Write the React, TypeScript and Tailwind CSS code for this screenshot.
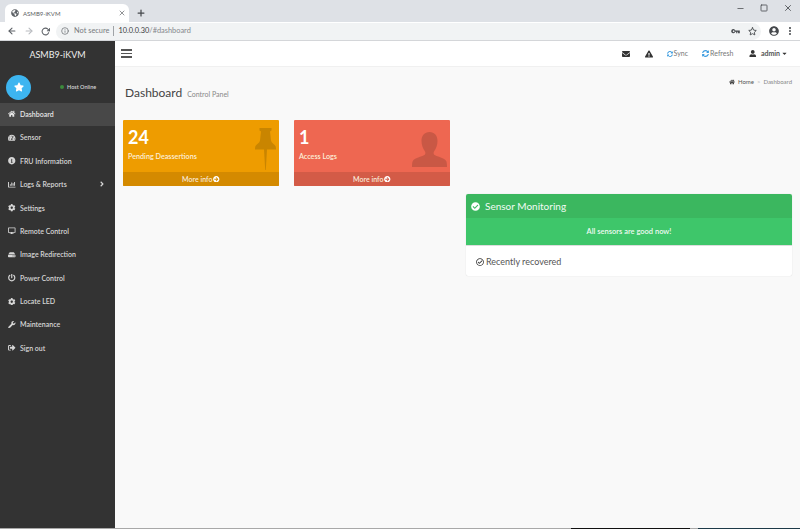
import type { ReactNode } from "react";
import type { IconType } from "react-icons";
import {
  FaAngleRight,
  FaArrowCircleRight,
  FaCaretDown,
  FaChartBar,
  FaCheckCircle,
  FaCog,
  FaDesktop,
  FaEnvelope,
  FaExclamationTriangle,
  FaGlobeAmericas,
  FaHdd,
  FaHome,
  FaInfoCircle,
  FaPowerOff,
  FaRegCheckCircle,
  FaSignOutAlt,
  FaStar,
  FaSyncAlt,
  FaTachometerAlt,
  FaUser,
  FaUserCircle,
  FaWrench,
} from "react-icons/fa";
import { FiArrowLeft, FiArrowRight, FiInfo, FiMoreVertical, FiRotateCw, FiStar, FiX, FiPlus, FiMinus, FiSquare } from "react-icons/fi";

const menu: { label: string; icon: IconType; arrow?: boolean }[] = [
  { label: "Dashboard", icon: FaHome },
  { label: "Sensor", icon: FaTachometerAlt },
  { label: "FRU Information", icon: FaInfoCircle },
  { label: "Logs & Reports", icon: FaChartBar, arrow: true },
  { label: "Settings", icon: FaCog },
  { label: "Remote Control", icon: FaDesktop },
  { label: "Image Redirection", icon: FaHdd },
  { label: "Power Control", icon: FaPowerOff },
  { label: "Locate LED", icon: FaCog },
  { label: "Maintenance", icon: FaWrench },
  { label: "Sign out", icon: FaSignOutAlt },
];

function KeyIcon() {
  return (
    <svg viewBox="0 0 12 7" className="ml-auto h-[5px] w-[9px] text-[#45484c]" fill="currentColor">
      <path d="M3 0a3 3 0 1 0 2.8 4H7v2h1.6V4h1V6H12V2.2H5.8A3 3 0 0 0 3 0zm0 2a1.2 1.2 0 1 1 0 2.3A1.2 1.2 0 0 1 3 2z" />
    </svg>
  );
}

function PinIcon({ className }: { className: string }) {
  return (
    <svg viewBox="0 0 21 42" className={className} fill="currentColor">
      <path d="M4.5 0h12v2.5l-1.5 1 1 9c.4 2.5 3.5 3.5 4.5 5.5.4.8.5 2.5.5 3.5H12l-1.2 20.5h-.6L9 21.5H0c0-1 .1-2.7.5-3.5 1-2 4.1-3 4.5-5.5l1-9-1.500-1z" />
    </svg>
  );
}

function BustIcon({ className }: { className: string }) {
  return (
    <svg viewBox="0 0 35 35" className={className} fill="currentColor">
      <path d="M17.500 0c5 0 8 3.500 8 9 0 4-1.500 8-3.500 10.500-.6.8-.5 2.600.2 3.300 1.800 1.700 10 3 12 6.200.6 1 .8 3.500.8 6H0c0-2.500.2-5 .8-6 2-3.200 10.200-4.500 12-6.200.7-.7.8-2.500.2-3.300C11 17 9.500 13 9.500 9c0-5.500 3-9 8-9z" />
    </svg>
  );
}

function BrowserBar() {
  return (
    <div className="h-[41px] shrink-0 border-b border-[#d4d6d9] bg-white">
      <div className="flex h-[22px] items-end bg-[#dee1e6] pl-[5px]">
        <div className="flex h-[18px] w-[124px] items-center rounded-t-[6px] bg-white pl-[6px] pr-[3px] text-[#5a5d61]">
          <FaGlobeAmericas className="text-[8px] text-[#5f6368]" />
          <span className="ml-[4px] flex-1 text-[6px]">ASMB9-iKVM</span>
          <FiX className="text-[8px]" />
        </div>
        <FiPlus className="mb-[4px] ml-[7px] text-[10px] text-[#45484c]" strokeWidth={3} />
        <div className="ml-auto flex items-center gap-[15px] self-start pr-[7px] pt-[3px] text-[#45484c]">
          <FiMinus className="text-[9px]" />
          <FiSquare className="text-[8px]" strokeWidth={2.4} />
          <FiX className="text-[10px]" />
        </div>
      </div>
      <div className="flex h-[18px] items-center text-[#5f6368]">
        <FiArrowLeft className="ml-[7px] text-[10px]" strokeWidth={2.6} />
        <FiArrowRight className="ml-[7px] text-[10px] text-[#b9bcc0]" strokeWidth={2.6} />
        <FiRotateCw className="ml-[7px] text-[9px]" strokeWidth={2.8} />
        <div className="ml-[6px] flex h-[17px] w-[705px] items-center rounded-full bg-[#f1f3f4] pl-[5px] pr-[4px]">
          <FiInfo className="text-[8px]" />
          <span className="ml-[5px] text-[7.4px] text-[#777a7e]">Not secure</span>
          <span className="mx-[4px] h-[10px] w-px bg-[#a0a3a7]" />
          <span className="text-[7.4px] text-[#3c4043]">
            10.0.0.30<span className="text-[#85888c]">/#dashboard</span>
          </span>
          <KeyIcon />
          <FiStar className="ml-[8px] text-[9px] text-[#45484c]" strokeWidth={2.4} />
        </div>
        <FaUserCircle className="ml-[8px] text-[10px] text-[#45484c]" />
        <FiMoreVertical className="ml-[6px] text-[10px] text-[#45484c]" strokeWidth={3} />
      </div>
    </div>
  );
}

function Sidebar() {
  return (
    <aside className="w-[115px] shrink-0 bg-[#333333] text-[#d6d6d6]">
      <div className="flex h-[27px] items-center justify-center text-[9px] text-[#eeeeee]">ASMB9-iKVM</div>
      <div className="flex h-[35px] items-center pl-[6px] pt-[3px]">
        <div className="flex h-[25px] w-[25px] items-center justify-center rounded-full bg-[#3db5f0]">
          <FaStar className="text-[10px] text-white" />
        </div>
        <span className="ml-[29px] h-[4px] w-[4px] rounded-full bg-[#3c8a3c]" />
        <span className="ml-[3px] text-[5.5px] font-semibold">Host Online</span>
      </div>
      <nav className="mt-[-0.5px]">
        {menu.map(({ label, icon: Icon, arrow }, i) => (
          <div
            key={label}
            className={`flex h-[23.4px] items-center pl-[8px] pr-[9px] text-[7px] font-semibold ${
              i === 0 ? "bg-[#484848] text-[#e6e6e6]" : ""
            }`}
          >
            <span className="flex w-[12px] justify-start">
              <Icon className="text-[7.5px]" />
            </span>
            <span>{label}</span>
            {arrow && <FaAngleRight className="ml-auto text-[8px]" />}
          </div>
        ))}
      </nav>
    </aside>
  );
}

function TopNav() {
  return (
    <header className="flex h-[26px] shrink-0 items-center border-b border-[#f0f0f0] bg-white pl-[6px] pr-[12px] text-[#555555]">
      <div className="flex w-[11px] flex-col gap-[2px]">
        <span className="h-[1.5px] bg-[#555555]" />
        <span className="h-[1.5px] bg-[#555555]" />
        <span className="h-[1.5px] bg-[#555555]" />
      </div>
      <FaEnvelope className="ml-auto text-[8px] text-[#333333]" />
      <FaExclamationTriangle className="ml-[15px] text-[8px] text-[#333333]" />
      <FaSyncAlt className="ml-[14px] text-[6px] text-[#3c9ce0]" />
      <span className="ml-[1px] text-[7px] text-[#777777]">Sync</span>
      <FaSyncAlt className="ml-[14px] text-[7px] text-[#3c9ce0]" />
      <span className="ml-[1px] text-[7px] text-[#777777]">Refresh</span>
      <FaUser className="ml-[16px] text-[7.5px] text-[#333333]" />
      <span className="ml-[4px] text-[7px] font-bold text-[#555555]">admin</span>
      <FaCaretDown className="ml-[1px] text-[7px] text-[#333333]" />
    </header>
  );
}

function StatCard(props: { value: string; label: string; bg: string; foot: string; children: ReactNode }) {
  return (
    <div className={`relative flex h-[66px] flex-col overflow-hidden rounded-[1px] text-white ${props.bg}`}>
      <div className="flex-1 pl-[5px] pt-[5px]">
        <div className="text-[18px] font-bold leading-[24px]">{props.value}</div>
        <div className="mt-[3px] text-[7.2px] font-semibold leading-[10px] text-[#fdeed8]">{props.label}</div>
      </div>
      {props.children}
      <div className={`flex h-[14px] items-center justify-center gap-[1px] text-[7px] font-semibold text-[#f8e8d8] ${props.foot}`}>
        More info <FaArrowCircleRight className="text-[6.5px] text-white" />
      </div>
    </div>
  );
}

function Dashboard() {
  return (
    <main className="flex-1 bg-[#f9f9f9] text-[#444444]">
      <div className="flex items-start justify-between pl-[10px] pr-[8px]">
        <div className="flex items-baseline pt-[18px]">
          <h1 className="text-[12px] leading-[16px] text-[#444444]">Dashboard</h1>
          <span className="ml-[5px] text-[7px] text-[#888888]">Control Panel</span>
        </div>
        <div className="flex items-center pt-[10px] text-[6px]">
          <FaHome className="text-[6px] text-[#444444]" />
          <span className="ml-[3px] text-[#555555]">Home</span>
          <span className="mx-[3px] text-[#bbbbbb]">&gt;</span>
          <span className="text-[#888888]">Dashboard</span>
        </div>
      </div>
      <div className="mt-[19px] grid grid-cols-[156px_156px_327px] gap-x-[15px] pl-[8px]">
        <StatCard value="24" label="Pending Deassertions" bg="bg-[#ee9c00]" foot="bg-[#d48a00]">
          <PinIcon className="absolute right-[3px] top-[8px] h-[42px] w-[21px] text-[#c98500]" />
        </StatCard>
        <StatCard value="1" label="Access Logs" bg="bg-[#ee6751]" foot="bg-[#d35b47]">
          <BustIcon className="absolute right-[3px] top-[12px] h-[35px] w-[35px] text-[#c95845]" />
        </StatCard>
        <div />
        <section className="col-start-3 ml-[1px] mt-[8px] overflow-hidden rounded-[2px] bg-white shadow-[0_0_1px_rgba(0,0,0,0.2)]">
          <div className="flex h-[24px] items-center bg-[#3bb75f] pl-[5px] pt-[1px] text-[10px] text-[#f1fbf4]">
            <FaCheckCircle className="mr-[5px] text-[9px] text-white" />
            Sensor Monitoring
          </div>
          <div className="flex h-[28px] items-center justify-center border-b border-[#dddddd] bg-[#3ec66a] text-[7.5px] font-semibold text-[#eefaf2]">
            All sensors are good now!
          </div>
          <div className="flex h-[30px] items-center pl-[10px] pt-[1px] text-[9px] text-[#555555]">
            <FaRegCheckCircle className="mr-[2px] text-[8px] text-[#333333]" />
            Recently recovered
          </div>
        </section>
      </div>
    </main>
  );
}

export default function App() {
  return (
    <div className="flex h-[529px] w-[800px] flex-col overflow-hidden bg-white font-['Lato','Open_Sans',sans-serif]">
      <BrowserBar />
      <div className="flex min-h-0 flex-1">
        <Sidebar />
        <div className="flex min-w-0 flex-1 flex-col">
          <TopNav />
          <Dashboard />
        </div>
      </div>
      {/* taskbar sliver cropped at the bottom edge */}
      <div className="flex h-px shrink-0 bg-[#a8a8a8]">
        <div className="ml-[571px] w-[119px] bg-[#111111]" />
        <div className="ml-[8px] flex-1 bg-[#1d3a48]" />
      </div>
    </div>
  );
}
